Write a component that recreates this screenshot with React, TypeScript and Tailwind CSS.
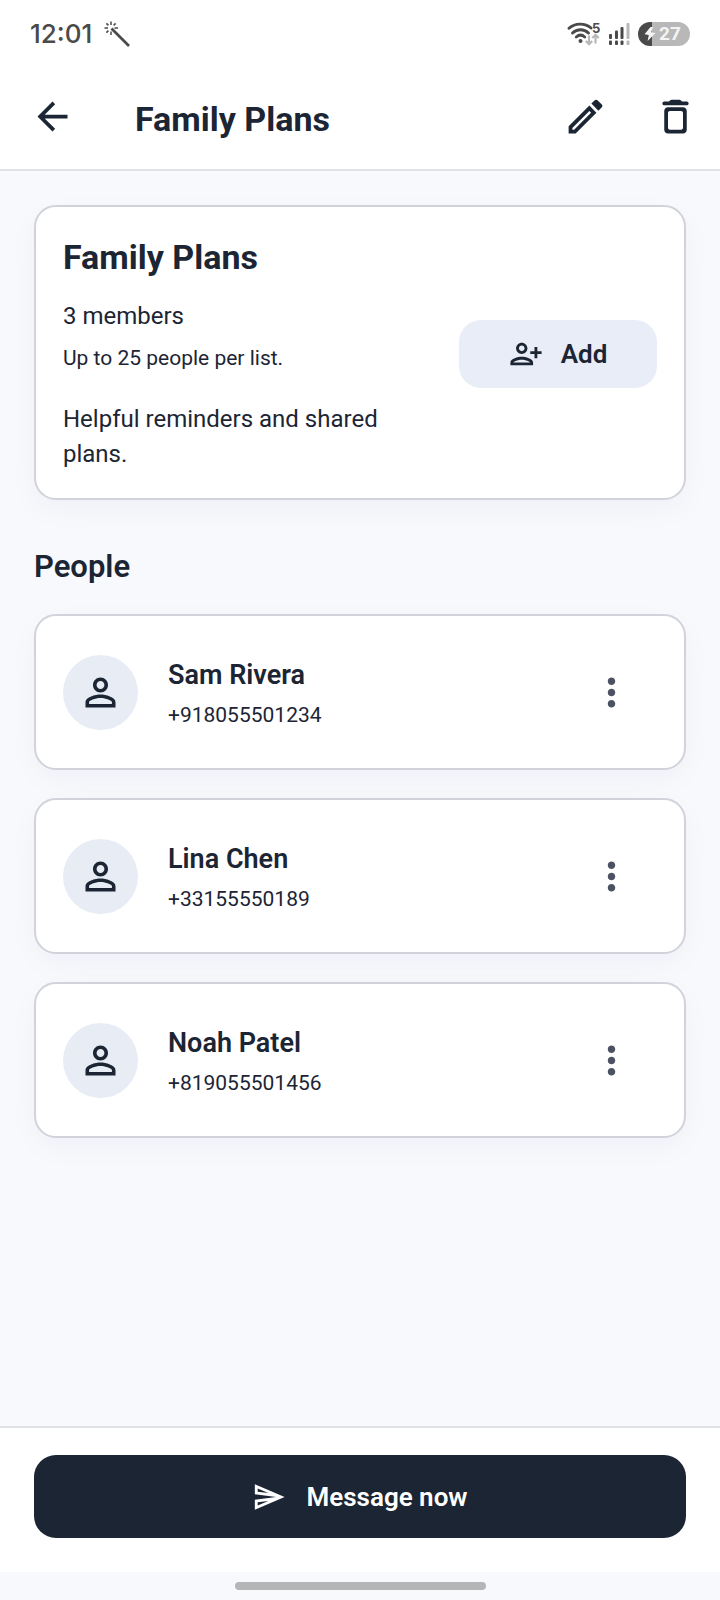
import type { ReactNode } from "react";

const people = [
  { name: "Sam Rivera", phone: "+918055501234" },
  { name: "Lina Chen", phone: "+33155550189" },
  { name: "Noah Patel", phone: "+819055501456" },
];

const icons = {
  back: "M20 11H7.83l5.59-5.59L12 4l-8 8 8 8 1.41-1.41L7.83 13H20v-2z",
  edit: "M14.06 9.02l.92.92L5.92 19H5v-.92l9.06-9.06M17.66 3c-.25 0-.51.1-.7.29l-1.83 1.83 3.75 3.75 1.83-1.83c.39-.39.39-1.02 0-1.41l-2.34-2.34c-.2-.2-.45-.29-.71-.29zm-3.6 3.19L3 17.25V21h3.75L17.81 9.94l-3.75-3.75z",
  trash:
    "M6 19c0 1.1.9 2 2 2h8c1.1 0 2-.9 2-2V9c0-1.1-.9-2-2-2H8c-1.1 0-2 .9-2 2v10zM9 9h6c.55 0 1 .45 1 1v8c0 .55-.45 1-1 1H9c-.55 0-1-.45-1-1v-8c0-.55.45-1 1-1zm6.5-5l-.71-.71c-.18-.18-.44-.29-.7-.29H9.91c-.26 0-.52.11-.7.29L8.5 4H6c-.55 0-1 .45-1 1s.45 1 1 1h12c.55 0 1-.45 1-1s-.45-1-1-1h-2.5z",
  addPerson:
    "M13 8c0-2.21-1.79-4-4-4S5 5.79 5 8s1.79 4 4 4 4-1.79 4-4zm-2 0c0 1.1-.9 2-2 2s-2-.9-2-2 .9-2 2-2 2 .9 2 2zM1 18v2h16v-2c0-2.66-5.33-4-8-4s-8 1.34-8 4zm2 0c.2-.71 3.3-2 6-2 2.69 0 5.77 1.28 6 2H3zm17-3v-3h3v-2h-3V7h-2v3h-3v2h3v3h2z",
  person:
    "M12 5.9c1.16 0 2.1.94 2.1 2.1s-.94 2.1-2.1 2.1S9.9 9.16 9.9 8s.94-2.1 2.1-2.1m0 9c2.97 0 6.1 1.46 6.1 2.1v1.1H5.9V17c0-.64 3.13-2.1 6.1-2.1M12 4C9.79 4 8 5.79 8 8s1.79 4 4 4 4-1.79 4-4-1.79-4-4-4zm0 9c-2.67 0-8 1.34-8 4v3h16v-3c0-2.66-5.33-4-8-4z",
  more: "M12 8c1.1 0 2-.9 2-2s-.9-2-2-2-2 .9-2 2 .9 2 2 2zm0 2c-1.1 0-2 .9-2 2s.9 2 2 2 2-.9 2-2-.9-2-2-2zm0 6c-1.1 0-2 .9-2 2s.9 2 2 2 2-.9 2-2-.9-2-2-2z",
  send: "M4.01 6.03l7.51 3.22-7.52-1 .01-2.22m7.5 8.72L4 17.97v-2.22l7.51-1M2.01 3L2 10l15 2-15 2 .01 7L23 12 2.01 3z",
};

function Icon({ name, className }: { name: keyof typeof icons; className: string }) {
  return (
    <svg viewBox="0 0 24 24" fill="currentColor" className={className} aria-hidden="true">
      <path d={icons[name]} />
    </svg>
  );
}

function Card({ className, children }: { className: string; children: ReactNode }) {
  return (
    <div
      className={`rounded-[22px] border-2 border-[#d1d3da] bg-white shadow-[0_10px_30px_rgba(27,36,51,0.035)] ${className}`}
    >
      {children}
    </div>
  );
}

function StatusBar() {
  return (
    <div className="flex h-[66px] items-center justify-between bg-white px-[30px] pt-px text-[#4a4a4a]">
      <div className="flex items-center gap-3">
        <span className="font-['Inter',sans-serif] text-[26px] font-medium leading-8">12:01</span>
        {/* magic wand */}
        <svg viewBox="0 0 26 26" className="size-[26px]" fill="none" stroke="currentColor" aria-hidden="true">
          <path d="M7.5 7.5L25 25" strokeWidth="2.6" />
          <path
            d="M7 0.5V4M7 10.5V14M0.5 7H4M10.5 7H14M2.4 2.4L4.4 4.4M11.6 2.4L9.6 4.4M2.4 11.6L4.4 9.6"
            strokeWidth="1.5"
          />
        </svg>
      </div>

      <div className="flex items-center gap-2">
        {/* wifi */}
        <svg viewBox="0 -6 34 36" className="h-9 w-[34px]" fill="none" stroke="currentColor" aria-hidden="true">
          <path d="M2 6.3C8 0.8 18 0.8 24 6" strokeWidth="2.9" strokeLinecap="round" />
          <path d="M5.5 11C10 6.6 17 6.6 21.5 11" strokeWidth="2.9" strokeLinecap="round" />
          <path d="M9.3 15C12 12.6 15 12.6 17.7 15" strokeWidth="2.9" strokeLinecap="round" />
          <circle cx="13.5" cy="19" r="2" fill="currentColor" stroke="none" />
          <path
            d="M22 13.5V22M18.8 19L22 22.2L25.2 19M28.5 21.5V13M25.3 16L28.5 12.8L31.7 16"
            stroke="#b8b8b8"
            strokeWidth="2.2"
          />
          <text
            x="25"
            y="10.5"
            fill="currentColor"
            stroke="none"
            className="font-['Inter',sans-serif] text-[13px] font-bold"
          >
            5
          </text>
        </svg>
        {/* signal */}
        <svg viewBox="0 0 21 22" className="h-[22px] w-[21px]" fill="currentColor" aria-hidden="true">
          <rect x="0" y="11" width="3" height="5" rx="1" />
          <rect x="6" y="7.5" width="3" height="8.5" rx="1" />
          <rect x="11.5" y="4" width="3" height="12" rx="1" />
          <rect x="17.5" y="0" width="3" height="16" rx="1" fill="#b8b8b8" />
          <rect x="0" y="17.5" width="3" height="4.5" rx="1" />
          <rect x="6" y="17.5" width="3" height="4.5" rx="1" />
          <rect x="11.5" y="17.5" width="3" height="4.5" rx="1" />
          <rect x="17.5" y="17.5" width="3" height="4.5" rx="1" fill="#b8b8b8" />
        </svg>
        {/* battery */}
        <div className="flex h-6 w-[52px] items-center gap-[3px] rounded-full bg-linear-to-r from-[#4a4a4a] from-27% to-[#b8b8b8] to-27% pl-[6px] text-[#f4f4f4]">
          <svg viewBox="0 0 12 14" className="h-[14px] w-3" fill="currentColor" aria-hidden="true">
            <path d="M6.5 0L0.5 7.2L4.8 8L3.6 14L11.5 6L7.2 5.2L9 0Z" />
          </svg>
          <span className="text-[19px] font-bold leading-6">27</span>
        </div>
      </div>
    </div>
  );
}

export default function App() {
  return (
    <div className="flex min-h-screen flex-col bg-[#f8f9fd] font-['Roboto',sans-serif] text-[#1c2533]">
      <StatusBar />

      <header className="flex h-[105px] items-center border-b-2 border-[#e1e2e8] bg-white pl-[30px] pr-[22px]">
        <button type="button" aria-label="Back" className="mb-[2px]">
          <Icon name="back" className="size-[45px]" />
        </button>
        <h1 className="ml-[60px] flex-1 pt-[2px] text-[34px] font-bold leading-[44px]">Family Plans</h1>
        <div className="mb-[2px] flex gap-[45px]">
          <button type="button" aria-label="Edit list">
            <Icon name="edit" className="size-[45px]" />
          </button>
          <button type="button" aria-label="Delete list">
            <Icon name="trash" className="size-[45px]" />
          </button>
        </div>
      </header>

      <main className="flex-1 px-[34px] pt-[34px]">
        <Card className="flex items-center justify-between gap-8 px-[27px] pb-[26px] pt-7">
          <div className="flex-1">
            <h2 className="text-[34px] font-bold leading-[44px]">Family Plans</h2>
            <p className="mt-5 text-[24px] leading-[35px]">3 members</p>
            <p className="mt-2 text-[21px] leading-8">Up to 25 people per list.</p>
            <p className="mt-7 text-[24px] leading-[35px]">Helpful reminders and shared plans.</p>
          </div>
          <button
            type="button"
            className="flex h-[68px] w-[198px] items-center justify-center gap-[18px] rounded-[22px] bg-[#e9edf8] text-[26px] font-semibold leading-8"
          >
            <Icon name="addPerson" className="size-[34px]" />
            Add
          </button>
        </Card>

        <h2 className="mt-12 text-[31px] font-semibold leading-[38px]">People</h2>

        <ul className="mt-7 flex flex-col gap-7 pb-8">
          {people.map((person) => (
            <li key={person.phone}>
              <Card className="flex h-[156px] items-center pl-[27px] pr-[50px]">
                <div className="flex size-[75px] items-center justify-center rounded-full bg-[#e7ecf5]">
                  <Icon name="person" className="size-[45px]" />
                </div>
                <div className="ml-[30px] flex-1 pt-[5px]">
                  <h3 className="text-[27px] font-semibold leading-[40px]">{person.name}</h3>
                  <p className="text-[21px] leading-[40px]">{person.phone}</p>
                </div>
                <button type="button" aria-label={`Options for ${person.name}`} className="text-[#4c5261]">
                  <Icon name="more" className="size-[45px]" />
                </button>
              </Card>
            </li>
          ))}
        </ul>
      </main>

      <footer>
        <div className="border-t-2 border-[#e1e2e8] bg-white px-[34px] pb-[34px] pt-[27px]">
          <button
            type="button"
            className="flex h-[83px] w-full items-center justify-center gap-5 rounded-[22px] bg-[#1c2533] text-[26px] font-semibold leading-8 text-white"
          >
            <Icon name="send" className="size-[34px]" />
            Message now
          </button>
        </div>
        <div className="flex h-7 items-center justify-center">
          <div className="h-2 w-[251px] rounded-full bg-[#b4b5b7]" />
        </div>
      </footer>
    </div>
  );
}
